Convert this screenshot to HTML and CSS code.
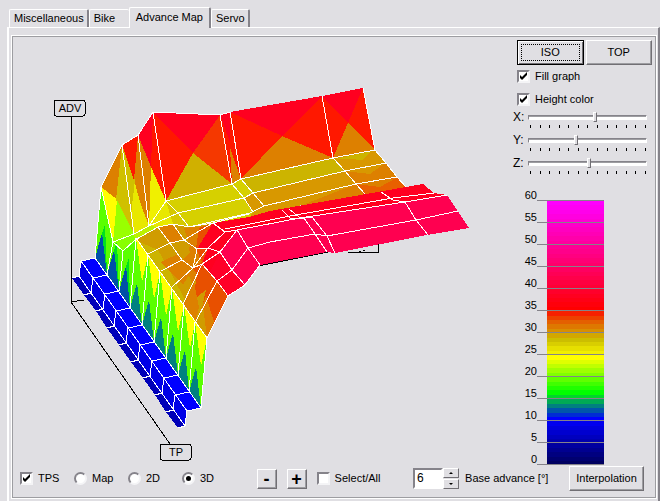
FILE: index.html
```
<!DOCTYPE html>
<html lang="en">
<head>
  <meta charset="UTF-8">
  <title>Advance Map</title>
  <link rel="stylesheet" href="styles.css">
</head>
<body>

  <nav class="tabs" role="tablist">
    <button class="tab" role="tab">Miscellaneous</button>
    <button class="tab bike" role="tab">Bike</button>
    <button class="tab active" role="tab" aria-selected="true">Advance Map</button>
    <button class="tab" role="tab">Servo</button>
  </nav>

  <main class="tab-page">
    <div class="group">
      <div class="top">
        <svg class="chart" viewBox="13 38 500 428" preserveAspectRatio="xMinYMin meet">
          <!-- axes -->
          <g class="axis">
            <path d="M71 115V302L170 444M71 302L84 300M258 266L328 252M348 252H378V244"/>
            <path d="M359 251h2M363 250h2"/>
          </g>

          <!-- back wall -->
          <polygon fill="#dd8000" points="101,187 122,145 118,200"/>
          <polygon fill="#ffff00" points="101,187 118,200 113,242"/>
          <polygon fill="#d0c000" points="122,145 134,234 116,200"/>
          <polygon fill="#99ff00" points="117,200 134,234 113,242"/>
          <polygon fill="#e8e800" points="122,145 138,135 149,226 134,234"/>
          <polygon fill="#dd8000" points="138,135 149,226 141,205 134,180"/>
          <polygon fill="#d0c000" points="122,145 135,180 131,214"/>
          <polygon fill="#ff1800" points="122,145 138,135 134,180"/>
          <polygon fill="#f0f000" points="151,165 166,201 149,226"/>
          <polygon fill="#dd8000" points="138,135 151,167 149,226"/>
          <polygon fill="#ff1800" points="153,112 166,201 151,167"/>
          <polygon fill="#ff0020" points="138,135 153,112 151,167"/>
          <polygon fill="#ff0020" points="153,112 220,115 193,153"/>
          <polygon fill="#ff1800" points="153,112 193,153 166,201"/>
          <polygon fill="#f53800" points="220,115 232,184 193,153"/>
          <polygon fill="#d0b000" points="193,153 232,184 166,201"/>
          <polygon fill="#ff1800" points="220,115 230,112 241,179 232,184"/>
          <polygon fill="#ff0020" points="220,115 230,112 230,142"/>
          <polygon fill="#dd8000" points="230,148 241,179 232,184"/>
          <polygon fill="#ff1800" points="230,112 322,96 333,158 241,179"/>
          <polygon fill="#ff0020" points="230,112 322,96 282,136"/>
          <polygon fill="#dd8000" points="282,136 333,158 241,179"/>
          <polygon fill="#ff1800" points="322,96 363,88 375,150 333,158"/>
          <polygon fill="#ff0020" points="322,96 363,88 348,123"/>
          <polygon fill="#dd8000" points="348,123 375,150 333,158"/>

          <!-- shelf -->
          <polygon fill="#d6d000" points="166,201 232,184 264,206 250,217 213,223 189,227"/>
          <polygon fill="#ccb400" points="232,184 241,179 333,158 345,171 253,193 244,198"/>
          <polygon fill="#d6d000" points="232,184 241,179 253,193 244,198"/>
          <polygon fill="#d89800" points="244,198 253,193 345,171 356,184 264,206 253,212"/>
          <polygon fill="#d89800" points="253,212 264,206 356,184 365,193 272,211 250,217"/>
          <polygon fill="#dd8000" points="300,206 356,184 365,195"/>
          <polygon fill="#d89800" points="333,158 375,150 386,163 345,171"/>
          <polygon fill="#ccb400" points="335,159 372,151 362,160 350,159"/>
          <polygon fill="#dd8000" points="345,171 386,163 397,177 356,184"/>
          <polygon fill="#d89800" points="345,171 384,164 370,174"/>
          <polygon fill="#e86000" points="356,184 397,177 406,188 365,196"/>
          <polygon fill="#dd8000" points="356,184 396,178 380,187"/>

          <!-- low saddle -->
          <polygon fill="#88ff00" points="113,242 134,234 149,226 158,227 135,240 123,251"/>
          <polygon fill="#e8e800" points="149,226 166,201 178,213 173,224 158,227"/>
          <polygon fill="#bcf000" points="134,234 149,226 158,227 135,240"/>
          <polygon fill="#d6c800" points="166,201 178,213 189,227 173,224"/>
          <polygon fill="#d09c00" points="135,240 158,227 173,224 189,227 213,223 228,296 207,338"/>
          <polygon fill="#ccb400" points="135,240 158,250 172,275 185,300 200,318 207,338"/>
          <polygon fill="#dd8000" points="158,227 173,224 184,240 170,243"/>
          <polygon fill="#dd8000" points="184,228 204,226 206,262 193,285 182,260 190,246"/>
          <polygon fill="#dd8000" points="161,262 182,252 193,268 183,285"/>
          <polygon fill="#d09c00" points="170,243 184,240 190,252 182,260"/>
          <polygon fill="#e85000" points="199,228 213,223 220,252 217,281 228,296 207,338 200,316 206,290 193,300 197,275 193,268 202,262 196,249"/>
          <polygon fill="#dd8000" points="196,321 206,296 214,322 207,338"/>
          <polygon fill="#d09c00" points="196,321 203,306 207,338"/>
          <polygon fill="#dd8000" points="183,304 194,282 199,307 196,321"/>

          <!-- front ridge -->
          <polygon fill="#ff0020" points="213,223 249,217 270,211 423,184 434,193 447,195 405,202 237,230 220,252 245,285 228,296 202,264 208,248 197,249"/>
          <polygon fill="#ff0028" points="220,252 232,270 245,285 228,296 210,272"/>
          <polygon fill="#ff0050" points="237,230 300,218 405,202 447,195 469,228 427,235 335,253 327,252 260,265 244,285 232,270 220,252"/>
          <g id="steps"></g>

          <g class="mesh">
            <path d="M101 187L122 145L138 135L153 112L220 115L230 112M363 88L375 150"/>
            <path d="M101 187L113 242M122 145L134 234M138 135L149 226M153 112L166 201M220 115L232 184M230 112L241 179M322 96L333 158"/>
            <path d="M149 226L166 201L232 184L241 179L333 158L375 150L386 163L397 177L406 187"/>
            <path d="M166 201L178 213L189 227M178 213L244 198L253 193L345 171L386 163"/>
            <path d="M158 227L173 224L189 227L250 213L264 206L356 184L397 177"/>
            <path d="M189 227L213 223L249 214M232 184L244 198L253 212M241 179L253 193L264 206M333 158L345 171L356 184L365 194"/>
            <path d="M113 242L134 234L149 226L178 213M113 242L123 251L135 240L158 227"/>
            <path d="M158 227L170 243L182 260L193 268L202 264L217 281L228 296"/>
            <path d="M173 224L184 240L197 249L208 248L220 252L232 270L245 285"/>
            <path d="M148 254L170 243L184 240L213 223L225 232L237 230L248 248L260 265"/>
            <path d="M161 271L182 260M172 287L193 268L208 248L225 232M183 304L202 264L220 252L237 230"/>
            <path d="M196 321L217 281L232 270L248 248M197 249L193 268M207 338L228 296L245 285L260 265"/>
            <path d="M237 230L300 218L405 202L447 195M248 248L270 242L315 234L327 236L416 220L458 211"/>
            <path d="M225 229L290 216L393 198L434 193"/>
            <path d="M282 210L290 218H304L315 234L327 252M289 209L299 217H312L327 236L335 253"/>
            <path d="M381 192L393 200L405 202L416 220L428 235"/>
          </g>

          <g class="axis-label">
            <rect x="54" y="100" width="31" height="16" rx="2"/>
            <text x="70" y="112">ADV</text>
            <rect x="160" y="444" width="31" height="16" rx="2"/>
            <text x="176" y="456">TP</text>
          </g>
        </svg>

        <aside class="side">
          <div class="views">
            <button class="btn default">ISO</button>
            <button class="btn">TOP</button>
          </div>
          <label class="check"><input type="checkbox" checked> Fill graph</label>
          <label class="check"><input type="checkbox" checked> Height color</label>

          <div class="slider">
            <label for="rot-x">X:</label>
            <div class="track">
              <input type="range" id="rot-x" min="0" max="120" value="68">
              <div class="ticks"></div>
            </div>
          </div>
          <div class="slider">
            <label for="rot-y">Y:</label>
            <div class="track">
              <input type="range" id="rot-y" min="0" max="120" value="48">
              <div class="ticks"></div>
            </div>
          </div>
          <div class="slider">
            <label for="rot-z">Z:</label>
            <div class="track">
              <input type="range" id="rot-z" min="0" max="120" value="62">
              <div class="ticks"></div>
            </div>
          </div>

          <div class="scale">
            <div class="bar" id="bar"></div>
            <ul class="marks" id="marks"></ul>
          </div>
        </aside>
      </div>

      <div class="bottom">
        <div class="modes">
          <label class="check"><input type="checkbox" checked> TPS</label>
          <label class="check"><input type="radio" name="mode"> Map</label>
          <label class="check"><input type="radio" name="mode"> 2D</label>
          <label class="check"><input type="radio" name="mode" checked> 3D</label>
        </div>
        <div class="edit">
          <button class="btn step">-</button>
          <button class="btn step">+</button>
          <label class="check"><input type="checkbox"> Select/All</label>
        </div>
        <div class="advance">
          <div class="spin">
            <input type="text" id="base" value="6">
            <div class="arrows">
              <button class="up" aria-label="Up"></button>
              <button class="down" aria-label="Down"></button>
            </div>
          </div>
          <label for="base">Base advance [°]</label>
        </div>
        <button class="btn interp">Interpolation</button>
      </div>
    </div>
  </main>

<script src="script.js"></script>
</body>
</html>
```
FILE: styles.css
```
* {
  box-sizing: border-box;
}

body {
  margin: 0;
  padding: 7px 0 0 7px;
  min-height: 100vh;
  display: flex;
  flex-direction: column;
  background: #e0dfe3;
  color: #000;
  font-family: "Liberation Sans", Arial, sans-serif;
  font-size: 11px;
  line-height: 13px;
}

button, input {
  font: inherit;
  color: inherit;
  margin: 0;
}

/* tabs */
.tabs {
  display: flex;
  align-items: flex-end;
  height: 21px;
  padding-left: 2px;
  position: relative;
  z-index: 1;
}

.tab {
  height: 18px;
  margin-bottom: 1px;
  padding: 0 3px 0 4px;
  background: #e0dfe3;
  border: 1px solid #fff;
  border-right: 2px solid #85838a;
  border-bottom: none;
  border-radius: 2px 2px 0 0;
}

.tab.bike {
  width: 40px;
  padding: 0 4px;
  border-right: none;
  text-align: left;
}

.tab.active {
  height: 21px;
  margin-bottom: 0;
  padding: 0 6px 2px;
}

.tab-page {
  flex: 1;
  margin-top: -1px;
  padding: 8px 2px 1px 3px;
  border-left: 2px solid #fff;
  border-top: 1px solid #fff;
  border-right: 2px solid #85838a;
}

.group {
  border: 1px solid #9d9da1;
  outline: 1px solid #fff;
  padding: 1px 3px 6px 0;
}

.top {
  display: flex;
}

/* 3d graph */
.chart {
  flex: 1;
  min-width: 0;
  height: 428px;
  shape-rendering: crispEdges;
}

.axis path {
  fill: none;
  stroke: #000;
}

.axis-label rect {
  fill: #e0dfe3;
  stroke: #000;
}

.axis-label text {
  font-size: 11px;
  text-anchor: middle;
}

.mesh path, .mesh-line {
  fill: none;
  stroke: #fff;
  stroke-width: 1;
}

/* right panel */
.side {
  width: 139px;
  padding-top: 2px;
}

.views {
  display: flex;
  gap: 2px;
  padding-left: 4px;
}

.btn {
  height: 25px;
  padding: 0;
  background: #e0dfe3;
  border: 1px solid;
  border-color: #fff #716f74 #716f74 #fff;
  box-shadow: inset -1px -1px #9d9da1;
}

.views .btn {
  flex: 1;
}

.btn.default {
  border-color: #000;
  box-shadow: inset 1px 1px #fff, inset -1px -1px #716f74;
  outline: 1px dotted #000;
  outline-offset: -5px;
}

.check {
  display: flex;
  align-items: center;
  gap: 5px;
}

.side .check {
  height: 23px;
  padding-left: 4px;
}

.check input {
  appearance: none;
  width: 13px;
  height: 13px;
  background: #fff;
  border: 2px solid;
  border-color: #85838a #f4f4f6 #f4f4f6 #85838a;
}

.check input[type="radio"] {
  border-radius: 50%;
}

.check input[type="checkbox"]:checked::before {
  content: "";
  display: block;
  width: 9px;
  height: 9px;
  background: #000;
  clip-path: polygon(1px 3px, 3px 5px, 8px 0, 8px 3px, 3px 8px, 1px 6px);
}

.check input[type="radio"]:checked::before {
  content: "";
  display: block;
  width: 5px;
  height: 5px;
  margin: 2px;
  border-radius: 50%;
  background: #000;
}

.slider {
  display: flex;
  height: 23px;
}

.slider label {
  width: 15px;
  font-size: 12px;
}

.track {
  flex: 1;
  padding-right: 5px;
}

.track input {
  appearance: none;
  display: block;
  width: 100%;
  height: 13px;
  background: transparent;
}

.track input::-webkit-slider-runnable-track {
  height: 5px;
  background: #fff;
  border: 1px solid;
  border-color: #85838a #fff #fff #85838a;
  box-shadow: inset 0 1px #9d9da1;
}

.track input::-webkit-slider-thumb {
  appearance: none;
  width: 4px;
  height: 10px;
  margin-top: -4px;
  background: #e0dfe3;
  border: 1px solid;
  border-color: #fff #716f74 #716f74 #fff;
}

.ticks {
  display: flex;
  justify-content: space-between;
  padding: 1px 1px 0 2px;
}

.ticks i {
  width: 1px;
  height: 3px;
  background: #000;
}

/* colour scale */
.scale {
  position: relative;
  padding: 21px 48px 0 34px;
}

.bar {
  display: flex;
  flex-direction: column;
  height: 264px;
}

.bar div {
  flex: 1;
}

.marks {
  position: absolute;
  top: 0;
  left: 0;
  right: 48px;
  margin: 0;
  padding: 0 0 0 10px;
  list-style: none;
}

.marks li {
  display: flex;
  align-items: flex-end;
  height: 22px;
}

.marks li:first-child {
  height: 21px;
}

.marks span {
  width: 14px;
  text-align: right;
  line-height: 12px;
}

.marks li::after {
  content: "";
  flex: 1;
  border-bottom: 1px solid #85838a;
}

/* bottom row */
.bottom {
  display: flex;
  align-items: center;
  justify-content: space-between;
  padding: 0 8px 0 7px;
}

.modes {
  display: grid;
  grid-template-columns: repeat(4, 54px);
}

.edit {
  display: flex;
  align-items: center;
  gap: 10px;
  padding-right: 12px;
}

.btn.step {
  width: 20px;
  height: 20px;
  font-size: 18px;
  font-weight: bold;
  line-height: 16px;
}

.advance {
  display: flex;
  align-items: center;
  gap: 6px;
}

.spin {
  display: flex;
  height: 21px;
}

.spin input {
  width: 30px;
  padding: 0 2px;
  background: #fff;
  border: 2px solid;
  border-color: #85838a #fff #fff #85838a;
  font-size: 12px;
}

.arrows {
  display: flex;
  flex-direction: column;
  gap: 1px;
}

.arrows button {
  flex: 1;
  width: 16px;
  padding: 0;
  display: flex;
  align-items: center;
  justify-content: center;
  background: #e0dfe3;
  border: 1px solid;
  border-color: #fff #716f74 #716f74 #fff;
}

.arrows button::before {
  content: "";
  border: 2px solid transparent;
}

.arrows .up::before {
  border-top: none;
  border-bottom-color: #000;
}

.arrows .down::before {
  border-bottom: none;
  border-top-color: #000;
}

.btn.interp {
  width: 75px;
}
```
FILE: script.js
```
const SVG = "http://www.w3.org/2000/svg";

// height -> colour, for the scale on the right
const stops = [
  [0, [0, 0, 80]],
  [11, [0, 0, 255]],
  [14, [0, 128, 128]],
  [17, [0, 255, 0]],
  [25, [255, 255, 0]],
  [29, [204, 190, 0]],
  [33, [228, 96, 0]],
  [36, [255, 0, 0]],
  [60, [255, 0, 255]]
];

function heightColor(v) {
  for (let i = 1; i < stops.length; i++) {
    const [a, ca] = stops[i - 1];
    const [b, cb] = stops[i];
    if (v <= b) {
      const t = (v - a) / (b - a);
      return `rgb(${ca.map((c, j) => Math.round(c + (cb[j] - c) * t)).join(",")})`;
    }
  }
}

const bar = document.getElementById("bar");
for (let v = 60; v > 0; v--) {
  const band = document.createElement("div");
  band.style.background = heightColor(v);
  bar.appendChild(band);
}

const marks = document.getElementById("marks");
for (let v = 60; v >= 0; v -= 5) {
  marks.innerHTML += `<li><span>${v}</span></li>`;
}

document.querySelectorAll(".ticks").forEach(t => {
  t.innerHTML = "<i></i>".repeat(13);
});

// steps of the map along the TP axis
const steps = document.getElementById("steps");
const at = (x, y, k) => [Math.round(x + 11.8 * k), Math.round(y + 16.7 * k)];
const rim = k => [[101, 187], [113, 242], [123, 251]][k] || at(101, 188, k);

function poly(fill, ...points) {
  const el = document.createElementNS(SVG, "polygon");
  el.setAttribute("points", points.join(" "));
  el.setAttribute("fill", fill);
  steps.appendChild(el);
}

function line(...points) {
  const el = document.createElementNS(SVG, "polyline");
  el.setAttribute("points", points.join(" "));
  el.setAttribute("class", "mesh-line");
  steps.appendChild(el);
}

for (let k = 0; k < 9; k++) {
  const t = at(95, 258, k), t2 = at(95, 258, k + 1);
  const m = at(81, 261, k), m2 = at(81, 261, k + 1);
  const n = at(79, 276, k), n2 = at(79, 276, k + 1);
  const l = at(72, 278, k), l2 = at(72, 278, k + 1);
  const u = rim(k), u2 = rim(k + 1);

  poly("#5aff00", t, t2, u2, u);
  if (k > 2) {
    poly("#ffff00", u, u2, [u[0] + 6, u[1] + 44]);
  } else {
    poly("#00e020", t, t2, [t[0] + 10, t[1] - 34]);
  }
  poly(k < 3 ? "#0050a8" : "#008080", t, t2, [t[0] + 7, t[1] - 25]);

  poly("#0000ff", t, t2, m2, m);
  poly("#0000e6", m, m2, n2, n);
  poly("#0000b8", n, n2, l2, l);
}

for (let k = 0; k <= 9; k++) {
  line(rim(k), at(95, 258, k), at(81, 261, k), at(79, 276, k), at(72, 278, k));
}
line(at(95, 258, 0), at(95, 258, 9));
line(at(81, 261, 0), at(81, 261, 9));
line(at(79, 276, 0), at(79, 276, 9));
line(rim(3), rim(9));
```
